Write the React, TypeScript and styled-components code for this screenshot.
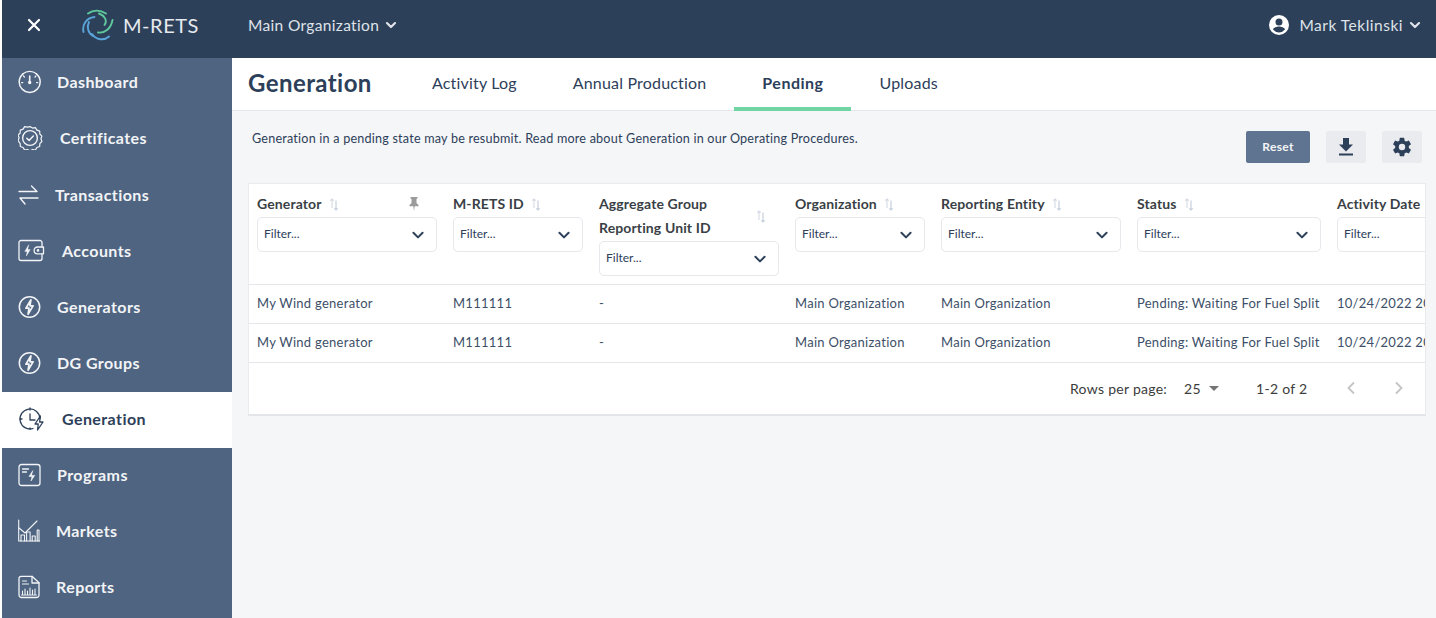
import React from "react";
import styled, { createGlobalStyle } from "styled-components";

const Global = createGlobalStyle`
  html, body { margin: 0; padding: 0; background: #fff; overflow: hidden; }
  * { box-sizing: border-box; }
  body { font-family: "Lato", "Open Sans", "Liberation Sans", sans-serif; }
`;

const Page = styled.div`
  width: 1436px; height: 618px; padding-left: 2px; display: flex; flex-direction: column; overflow: hidden;
`;
const TopBar = styled.header`
  height: 58px; flex: none; background: #2d405a; display: flex; align-items: center; color: #e3e7ec; padding: 0 14px 8px 0;
`;
const CloseBtn = styled.div`
  width: 64px; display: flex; justify-content: center; color: #fff;
`;
const Brand = styled.div`
  display: flex; align-items: center; margin-left: 16px; width: 166px; gap: 9px; font-size: 20px; color: #e6eaee; letter-spacing: .55px;
`;
const OrgMenu = styled.div`
  display: flex; align-items: center; gap: 5px; font-size: 15.5px; letter-spacing: .34px; color: #dfe3e9;
`;
const UserMenu = styled.div`
  margin-left: auto; display: flex; align-items: center; font-size: 15.5px; letter-spacing: .5px; color: #dfe3e9;
  gap: 5px;
  span { margin-left: 5px; }
`;
const Body = styled.div`
  flex: 1; display: flex; min-height: 0;
`;
const Sidebar = styled.nav`
  width: 230px; flex: none; background: #4f6480; display: flex; flex-direction: column;
`;
const NavItem = styled.div<{ $active?: boolean }>`
  height: 56px; flex: none; display: flex; align-items: center; gap: 16px; padding: 0 0 2px 16px;
  font-size: 16px; font-weight: 700; letter-spacing: .42px;
  color: ${p => (p.$active ? "#2d405a" : "#f2f4f7")};
  background: ${p => (p.$active ? "#fff" : "transparent")};
  &:first-child { height: 54px; padding-bottom: 6px; }
  &:nth-child(2) { padding-bottom: 4px; }
  svg { flex: none; }
`;
const NavLabel = styled.span`
  padding-bottom: 2px;
`;
const Main = styled.main`
  flex: 1; min-width: 0; background: #f5f6f8; display: flex; flex-direction: column;
`;
const PageHead = styled.div`
  height: 53px; flex: none; background: #fff; border-bottom: 1px solid #e4e7eb; display: flex; padding-left: 16px;
`;
const Title = styled.h1`
  margin: 0; width: 156px; font-size: 24px; line-height: 50px; font-weight: 700; color: #2d405a; letter-spacing: .42px;
`;
const Tab = styled.div<{ $active?: boolean }>`
  height: 53px; padding: 4px 28px; display: flex; align-items: center; font-size: 16px;
  letter-spacing: ${p => (p.$active ? ".48px" : ".18px")};
  color: #2d405a; font-weight: ${p => (p.$active ? 700 : 400)};
  border-bottom: 4px solid ${p => (p.$active ? "#71d4a3" : "transparent")};
`;
const Content = styled.div`
  padding: 20px 10px 0 16px; flex: 1;
`;
const ToolRow = styled.div`
  height: 52px; display: flex; align-items: flex-start;
`;
const Note = styled.p`
  margin: 0; padding-left: 4px; font-size: 12.6px; line-height: 15px; color: #2d405a; letter-spacing: .21px;
`;
const ToolButtons = styled.div`
  margin-left: auto; margin-right: 4px; display: flex; gap: 16px;
`;
const ResetBtn = styled.div`
  width: 64px; height: 32px; padding-bottom: 1px; background: #5f7490; color: #f4f6f8; border-radius: 2px; font-size: 12px; font-weight: 700; letter-spacing: .3px;
  display: flex; align-items: center; justify-content: center;
`;
const IconBtn = styled.div`
  width: 40px; height: 32px; background: #e9ebee; border-radius: 2px; display: flex; align-items: center; justify-content: center;
`;
const Card = styled.section`
  width: 1178px; height: 233px; background: #fff; border: 1px solid #e9ebee; border-bottom: 2px solid #e2e4e8; overflow: hidden;
`;
const columns = "180px 130px 180px 130px 180px 184px 130px";
const HeadRow = styled.div`
  height: 101px; padding: 8px 0 0 8px; display: grid; grid-template-columns: ${columns}; column-gap: 16px; border-bottom: 1px solid #e4e6ea; align-items: start;
`;
const HeadTop = styled.div`
  display: flex; align-items: center; height: 24px; gap: 7px;
`;
const HeadTopTall = styled.div`
  display: flex; align-items: center; justify-content: space-between; height: 48px; padding-right: 13px;
`;
const HeadLabel = styled.div`
  font-size: 14px; line-height: 24px; font-weight: 700; color: #3a3f46; white-space: nowrap; letter-spacing: .12px; padding-bottom: 1px;
`;
const PinBox = styled.div`
  margin-left: auto; margin-right: 17px; display: flex;
`;
const Select = styled.div`
  height: 35px; margin-top: 1px; border: 1px solid #e6e8ec; border-radius: 5px; display: flex; align-items: center; justify-content: space-between; padding: 0 10px 2px 6px;
  font-size: 12px; color: #2d405a; background: #fff; white-space: nowrap;
  svg { margin-top: 2px; }
`;
const Row = styled.div`
  height: 39px; padding: 0 0 3px 8px; display: grid; grid-template-columns: ${columns}; column-gap: 16px; align-items: center; border-bottom: 1px solid #e4e6ea;
  font-size: 13px; letter-spacing: .27px; color: #3d4f68; white-space: nowrap;
`;
const Footer = styled.div`
  height: 52px; display: flex; align-items: center; padding-left: 821px; font-size: 14px; letter-spacing: .28px; color: #3c3c3c; padding-bottom: 2px;
`;
const RowsLabel = styled.span`
  width: 114px;
`;
const RowsValue = styled.span`
  display: flex; align-items: center; width: 72px; gap: 8px;
`;
const PageCount = styled.span`
  width: 90px;
`;
const Pager = styled.div`
  display: flex; gap: 38px;
`;

const I = { fill: "none", stroke: "currentColor", strokeWidth: 1.5, strokeLinecap: "round" as const, strokeLinejoin: "round" as const };

const Bolt = ({ x, y, s = 1, solid }: { x: number; y: number; s?: number; solid?: boolean }) => (
  <path transform={`translate(${x} ${y}) scale(${s})`} d="M1.200-6 -3 1h2.600L-1.200 6 3-1H.4z" fill={solid ? "currentColor" : "none"} stroke="currentColor" strokeWidth={solid ? 0.5 : 1.4} strokeLinejoin="round" />
);

const icons: Record<string, { w: number; el: React.ReactNode }> = {
  Dashboard: { w: 23, el: <g {...I}><path d="M5 3.800a10.500 10.500 0 1 0 13.400 0" /><path d="M5 3.800A10.600 10.600 0 0 1 18.400 3.800" strokeWidth={1.3} /><path d="M11.700 6v6" strokeWidth={1.6} /><circle cx="11.700" cy="12.600" r="1" fill="currentColor" /><path d="M5.500 6 6.400 7M17.900 6 17 7M3.600 12.600h1.200M18.600 12.600h1.200" strokeWidth={1.2} /></g> },
  Certificates: { w: 26, el: <g {...I} strokeWidth={1.2}><path d="M12 0.600l2.500 1.500 2.900-.5 1.500 2.500 2.800 1 .1 2.900 2.100 2.100-1 2.700 1 2.700-2.100 2.100-.1 2.900-2.800 1-1.500 2.500-2.900-.5-2.500 1.500-2.500-1.500-2.900.5-1.500-2.500-2.800-1-.1-2.900L.1 14.500l1-2.700-1-2.700 2.100-2.100.1-2.900 2.800-1 1.500-2.500 2.900.5z" /><circle cx="12" cy="12" r="7.400" strokeWidth={1.4} /><path d="M8.800 12.200l2.300 2.200 4.200-4.400" strokeWidth={1.5} /></g> },
  Transactions: { w: 21, el: <g {...I} strokeWidth={1.4}><path d="M1 8.500h18M13.500 3 19 8.500" /><path d="M20 15H2M7 21 2 15" /></g> },
  Accounts: { w: 28, el: <g {...I} strokeWidth={1.3}><path d="M24 8V3.500a2 2 0 0 0-2-2H3a2 2 0 0 0-2 2v16a2 2 0 0 0 2 2h19a2 2 0 0 0 2-2v-4.700" /><path d="M25.500 8h-6a3.400 3.400 0 0 0 0 6.800h6z" /><circle cx="20" cy="11.400" r=".7" fill="currentColor" /><Bolt x={9.500} y={11.500} s={.9} solid /></g> },
  Generators: { w: 23, el: <g {...I}><circle cx="11.500" cy="12" r="10.200" /><Bolt x={11.500} y={12} s={1.2} /></g> },
  Generation: { w: 28, el: <g {...I} strokeWidth={1.3}><path d="M15 21.500a10 10 0 1 1 7-9.800" /><path d="M12 7v6h5" /><path d="M12 1v2M2 12H4M12 21v1" /><path transform="translate(21 16)" d="M1.400-7-4 1h3.200L-1.400 7 4-1H.6z" /></g> },
  Programs: { w: 23, el: <g {...I} strokeWidth={1.3}><rect x="1" y="1.500" width="21" height="21" rx="2.500" /><path d="M4.500 6h6M4.500 9h4" /><path d="M14.600 8 11 13.500h3L13 18l3.700-5.600h-3z" fill="currentColor" strokeWidth={.6} /></g> },
  Markets: { w: 22, el: <g {...I} strokeWidth={1.1}><path d="M.7 1v21h21" /><path d="M1 9l6 5 5-5 7-7" /><path d="M3 22v-6h3.500v6M8.600 22v-9h3.500v9M14.200 22v-5h3v5M19.200 22V11h1.800v11" /></g> },
  Reports: { w: 22, el: <g {...I} strokeWidth={1.3}><path d="M3 1.300h11l7 6.500V20a2.500 2.500 0 0 1-2.500 2.500H3A2.500 2.500 0 0 1 1 20V3.500a2 2 0 0 1 2-2.200z" /><path d="M14 1.500V8h7" /><path d="M4.500 6h4M4.500 9h6" strokeWidth={1.1} /><path d="M4.500 19v-3M7 19v-5M9.500 19v-3M12 19v-6M14.500 19v-4M17 19v-5M3.500 20h15" strokeWidth={1.1} /></g> },
};
icons["DG Groups"] = icons.Generators;

const navNames = ["Dashboard", "Certificates", "Transactions", "Accounts", "Generators", "DG Groups", "Generation", "Programs", "Markets", "Reports"];

const Chevron = ({ size = 16, color = "currentColor", weight = 2 }: { size?: number; color?: string; weight?: number }) => (
  <svg width={size} height={size} viewBox="0 0 16 16" fill="none" stroke={color} strokeWidth={weight} strokeLinecap="round" strokeLinejoin="round"><path d="M3.400 5.800 8 10.400l4.600-4.600" /></svg>
);

const Sort = () => (
  <svg width="10" height="14" viewBox="0 0 10 14" fill="none" strokeWidth="1.100"><path d="M3 11V2M1.300 3.700 3 2l1.700 1.700" stroke="#d3dae3" /><path d="M7 3.500V13M5.300 11.300 7 13l1.700-1.700" stroke="#c3cddb" /></svg>
);

const Filter = () => <Select>Filter...<Chevron size={16} color="#2d405a" /></Select>;

const Logo = () => (
  <svg width="32" height="32" viewBox="0 0 32 32" fill="none" strokeLinecap="round" strokeWidth="1.900">
    <path d="M6 4.500C11 1 18 .8 24 4.500" stroke="#5fc79c" />
    <path d="M17 4.500C22 6.500 26 11 22.500 16" stroke="#5fc79c" />
    <path d="M16 23.500C23 24.500 29 19.500 30.500 11" stroke="#5fc79c" />
    <path d="M1.500 23C0 16 4 9 12.500 8" stroke="#5aa5da" />
    <path d="M7 13C4.500 18 6 24 11 27" stroke="#5aa5da" />
    <path d="M10 25C14 31 22 32 27 27.500" stroke="#5aa5da" />
  </svg>
);

const Cell = ({ label, pin }: { label: string; pin?: boolean }) => (
  <div>
    <HeadTop>
      <HeadLabel>{label}</HeadLabel>
      <Sort />
      {pin && (
        <PinBox>
          <svg width="12" height="14" viewBox="0 0 12 14" fill="#9b9b9b"><path d="M2.500 0h7v1.300L8.500 2v4l2 2v1.300H6.700L6 14l-.7-4.700H1.500V8l2-2V2l-1-.7z" /></svg>
        </PinBox>
      )}
    </HeadTop>
    <Filter />
  </div>
);

const Data = () => (
  <Row>
    <div>My Wind generator</div>
    <div>M111111</div>
    <div>-</div>
    <div>Main Organization</div>
    <div>Main Organization</div>
    <div>Pending: Waiting For Fuel Split</div>
    <div>10/24/2022 20:15</div>
  </Row>
);

export default function App() {
  return (
    <Page>
      <Global />
      <TopBar>
        <CloseBtn>
          <svg width="14" height="14" viewBox="0 0 14 14" stroke="currentColor" strokeWidth="2.200" strokeLinecap="round"><path d="M2 2l10 10M12 2 2 12" /></svg>
        </CloseBtn>
        <Brand><Logo />M-RETS</Brand>
        <OrgMenu>Main Organization<Chevron size={14} weight={2.500} /></OrgMenu>
        <UserMenu>
          <svg width="20" height="20" viewBox="0 0 20 20"><path fill="#fff" fillRule="evenodd" d="M10 0a10 10 0 1 0 0 20 10 10 0 0 0 0-20zm0 3.500a3.500 3.500 0 1 1 0 7 3.500 3.500 0 0 1 0-7zm0 14a7.700 7.700 0 0 1-6-2.900c.3-2 3.900-3 6-3s5.700 1 6 3a7.700 7.700 0 0 1-6 2.900z" /></svg>
          <span>Mark Teklinski</span>
          <Chevron size={14} weight={2.500} />
        </UserMenu>
      </TopBar>
      <Body>
        <Sidebar>
          {navNames.map(name => (
            <NavItem key={name} $active={name === "Generation"}>
              <svg width={icons[name].w} height="24" viewBox={`0 0 ${icons[name].w} 24`}>{icons[name].el}</svg>
              <NavLabel>{name}</NavLabel>
            </NavItem>
          ))}
        </Sidebar>
        <Main>
          <PageHead>
            <Title>Generation</Title>
            <Tab>Activity Log</Tab>
            <Tab>Annual Production</Tab>
            <Tab $active>Pending</Tab>
            <Tab>Uploads</Tab>
          </PageHead>
          <Content>
            <ToolRow>
              <Note>Generation in a pending state may be resubmit. Read more about Generation in our Operating Procedures.</Note>
              <ToolButtons>
                <ResetBtn>Reset</ResetBtn>
                <IconBtn>
                  <svg width="16" height="18" viewBox="0 0 16 18" fill="#2d405a"><path d="M5 0h6v6.500h4L8 13.500 1 6.500h4zM1 15.500h14V17.500H1z" /></svg>
                </IconBtn>
                <IconBtn>
                  <svg width="22" height="22" viewBox="0 0 24 24" fill="#2d405a"><path d="M19.430 12.980c.04-.32.07-.64.07-.98s-.03-.66-.07-.98l2.110-1.650c.19-.15.24-.42.12-.64l-2-3.460c-.12-.22-.39-.3-.61-.22l-2.490 1c-.52-.4-1.080-.73-1.690-.98l-.38-2.650A.488.488 0 0 0 14 2h-4c-.25 0-.46.18-.49.420l-.38 2.650c-.61.25-1.170.59-1.690.98l-2.490-1a.566.566 0 0 0-.61.220l-2 3.460c-.13.220-.07.490.12.640l2.110 1.650c-.04.320-.07.650-.07.980s.03.660.07.980l-2.110 1.650c-.19.150-.24.420-.12.640l2 3.460c.12.220.39.300.61.220l2.490-1c.52.400 1.080.730 1.690.980l.38 2.650c.03.240.24.420.49.420h4c.25 0 .46-.18.49-.42l.38-2.650c.61-.25 1.170-.59 1.690-.98l2.490 1c.23.090.49 0 .61-.22l2-3.460c.12-.22.07-.49-.12-.64zM12 15.500a3.500 3.500 0 1 1 0-7 3.500 3.500 0 0 1 0 7z" /></svg>
                </IconBtn>
              </ToolButtons>
            </ToolRow>
            <Card>
              <HeadRow>
                <Cell label="Generator" pin />
                <Cell label="M-RETS ID" />
                <div>
                  <HeadTopTall>
                    <HeadLabel>Aggregate Group<br />Reporting Unit ID</HeadLabel>
                    <Sort />
                  </HeadTopTall>
                  <Filter />
                </div>
                <Cell label="Organization" />
                <Cell label="Reporting Entity" />
                <Cell label="Status" />
                <Cell label="Activity Date" />
              </HeadRow>
              <Data />
              <Data />
              <Footer>
                <RowsLabel>Rows per page:</RowsLabel>
                <RowsValue>25<svg width="10" height="5" viewBox="0 0 10 5" fill="#757575"><path d="M0 0h10L5 5z" /></svg></RowsValue>
                <PageCount>1-2 of 2</PageCount>
                <Pager>
                  <svg width="10" height="14" viewBox="0 0 10 14" fill="none" stroke="#c4c4c4" strokeWidth="1.800"><path d="M8 1.500 2.500 7 8 12.500" /></svg>
                  <svg width="10" height="14" viewBox="0 0 10 14" fill="none" stroke="#c4c4c4" strokeWidth="1.800"><path d="M2 1.500 7.500 7 2 12.500" /></svg>
                </Pager>
              </Footer>
            </Card>
          </Content>
        </Main>
      </Body>
    </Page>
  );
}
